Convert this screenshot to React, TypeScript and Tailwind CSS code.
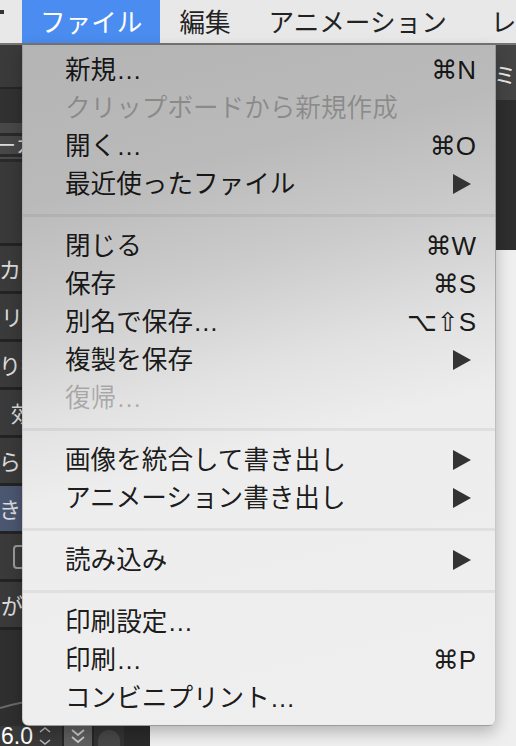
import React from 'react';

type Item = { label: string; sc?: string; sub?: boolean; dis?: boolean };

const sections: Item[][] = [
  [
    { label: '新規…', sc: '⌘N' },
    { label: 'クリップボードから新規作成', dis: true },
    { label: '開く…', sc: '⌘O' },
    { label: '最近使ったファイル', sub: true },
  ],
  [
    { label: '閉じる', sc: '⌘W' },
    { label: '保存', sc: '⌘S' },
    { label: '別名で保存…', sc: '⌥⇧S' },
    { label: '複製を保存', sub: true },
    { label: '復帰…', dis: true },
  ],
  [
    { label: '画像を統合して書き出し', sub: true },
    { label: 'アニメーション書き出し', sub: true },
  ],
  [{ label: '読み込み', sub: true }],
  [
    { label: '印刷設定…' },
    { label: '印刷…', sc: '⌘P' },
    { label: 'コンビニプリント…' },
  ],
];

function Arrow() {
  return (
    <svg width="18" height="20" viewBox="0 0 18 20" className="mr-[5px] shrink-0">
      <path d="M0 0 L18 10 L0 20 Z" fill="#333" />
    </svg>
  );
}

function Row({ it }: { it: Item }) {
  return (
    <div className="h-[38px] flex items-center pl-[42px] pr-[19px]">
      <span
        className={
          "flex-1 text-[25.6px] leading-[38px] whitespace-nowrap font-['Liberation_Sans','Noto_Sans_CJK_JP',sans-serif] " +
          (it.dis ? 'text-black/25' : 'text-black/[0.9]')
        }
      >
        {it.label}
      </span>
      {it.sc && (
        <span className="shrink-0 text-[26px] leading-[38px] text-black/[0.9] font-['Liberation_Sans','DejaVu_Sans',sans-serif]">
          {it.sc}
        </span>
      )}
      {it.sub && <Arrow />}
    </div>
  );
}

function Sep() {
  return (
    <div className="h-[24px] flex items-center">
      <div className="h-[3px] w-full bg-black/[0.06]" />
    </div>
  );
}

function LeftRow({ children, hl }: { children?: React.ReactNode; hl?: boolean }) {
  return (
    <div className="flex flex-col">
      <div className="h-[3px] bg-[#232323]" />
      <div
        className={
          'h-[45px] flex items-center overflow-hidden whitespace-nowrap ' +
          (hl ? 'bg-[#4b5670]' : 'bg-[#3a3a3a]')
        }
      >
        {children}
      </div>
    </div>
  );
}

export default function App() {
  return (
    <div className="relative w-[516px] h-[746px] overflow-hidden bg-[#efefef] font-['Noto_Sans_CJK_JP',sans-serif]">
      {/* menubar */}
      <div className="h-[45px] flex items-stretch bg-[#e8e8e8] border-b-2 border-[#767676] text-[25.6px] text-[#222] whitespace-nowrap overflow-hidden">
        <div className="w-[22px] shrink-0 relative">
          <div className="absolute left-0 top-[10px] w-[4px] h-[4px] bg-[#333]" />
        </div>
        <div className="shrink-0 px-[18px] bg-[#4a8cf0] text-white flex items-center">ファイル</div>
        <div className="shrink-0 px-[19px] flex items-center">編集</div>
        <div className="shrink-0 px-[19px] flex items-center">アニメーション</div>
        <div className="shrink-0 pl-[25px] flex items-center">レイヤー</div>
      </div>

      {/* body */}
      <div className="flex h-[701px]">
        {/* left panel */}
        <div className="w-[150px] shrink-0 flex flex-col bg-[#3a3a3a] text-[#dcdcdc] text-[22px] font-['Noto_Sans_CJK_JP',sans-serif]">
          <div className="h-[42px] bg-[#3a3a3a]" />
          <div className="h-[2px] bg-[#262626]" />
          <div className="h-[34px] bg-[#313131]" />
          <div className="h-[10px] bg-[#484848]" />
          <div className="h-[3px] bg-[#2a2a2a]" />
          <div className="h-[18px] bg-[#474747] flex items-center overflow-hidden whitespace-nowrap">
            <span className="-ml-[4px] text-[20px] leading-[18px]">ーカ</span>
          </div>
          <div className="h-[3px] bg-[#2a2a2a]" />
          <div className="h-[2px] bg-[#4a4a4a]" />
          <div className="h-[3px] bg-[#2a2a2a]" />
          <div className="h-[81px] bg-[#393939]" />
          <LeftRow><span className="ml-[-1px]">カフ</span></LeftRow>
          <LeftRow><span className="ml-[1px]">リク</span></LeftRow>
          <LeftRow><span className="ml-[-1px]">り抜</span></LeftRow>
          <LeftRow><span className="ml-[11px]">効</span></LeftRow>
          <LeftRow><span className="ml-[-1px]">らつ</span></LeftRow>
          <LeftRow hl><span className="ml-[-1px]">きミ</span></LeftRow>
          <LeftRow>
            <div className="ml-[13px] w-[18px] h-[24px] rounded-[4px] border-2 border-[#9a9a9a]" />
          </LeftRow>
          <LeftRow><span className="ml-[1px]">が</span></LeftRow>
          <div className="h-[3px] bg-[#232323]" />
          <div className="h-[96px] bg-[#2f2f2f] relative">
            <svg width="150" height="96" className="absolute left-0 top-0">
              <path d="M0 78 Q 20 72 40 70" stroke="#6a6a6a" strokeWidth="2" fill="none" />
            </svg>
          </div>
          <div className="flex-1 flex items-center bg-[#3a3a3a] overflow-hidden">
            <span className="text-[23px] leading-[22px] text-white font-['Liberation_Sans',sans-serif] ml-[1px]">6.0</span>
            <svg width="14" height="20" viewBox="0 0 14 20" className="ml-[5px] shrink-0">
              <path d="M2 6 L7 2 L12 6" stroke="#bbb" strokeWidth="1.6" fill="none" />
              <path d="M2 14 L7 18 L12 14" stroke="#bbb" strokeWidth="1.6" fill="none" />
            </svg>
            <div className="ml-[10px] w-[2px] h-full bg-[#262626] shrink-0" />
            <div className="w-[28px] shrink-0 h-full bg-[#5e5e5e] flex items-center justify-center">
              <svg width="16" height="18" viewBox="0 0 16 18">
                <path d="M2 3 L8 8 L14 3" stroke="#c8c8c8" strokeWidth="1.8" fill="none" />
                <path d="M2 10 L8 15 L14 10" stroke="#c8c8c8" strokeWidth="1.8" fill="none" />
              </svg>
            </div>
            <div className="w-[2px] shrink-0 h-full bg-[#262626]" />
            <div className="w-[30px] shrink-0 h-full bg-[#333] flex items-end justify-center">
              <div className="w-[22px] h-[16px] rounded-t-full bg-[#474747]" />
            </div>
            <div className="flex-1 h-full bg-[#2a2a2a]" />
          </div>
        </div>

        {/* right area */}
        <div className="flex-1 flex flex-col">
          <div className="h-[205px] flex flex-col">
            <div className="h-[55px] bg-[#444] flex items-center justify-end overflow-hidden">
              <span className="text-[22px] text-[#e8e8e8] leading-none">ミ</span>
            </div>
            <div className="flex-1 bg-[#2e2e2e]" />
          </div>
          <div className="flex-1 bg-[#efefef]" />
        </div>
      </div>

      {/* dropdown menu */}
      <div className="absolute left-[22px] top-[45px] w-[474px] pt-[6px] pb-[8px] rounded-b-[7px] border-x border-b border-black/15 shadow-[0_6px_16px_rgba(0,0,0,0.25)] bg-[linear-gradient(166deg,#b4b4b4_0%,#bababa_20%,#cbcbcb_34%,#e2e2e2_48%,#ededed_58%,#efefef_100%)]">
        {sections.map((sec, i) => (
          <div key={i}>
            {i > 0 && <Sep />}
            {sec.map((it, j) => (
              <Row key={j} it={it} />
            ))}
          </div>
        ))}
      </div>
    </div>
  );
}
